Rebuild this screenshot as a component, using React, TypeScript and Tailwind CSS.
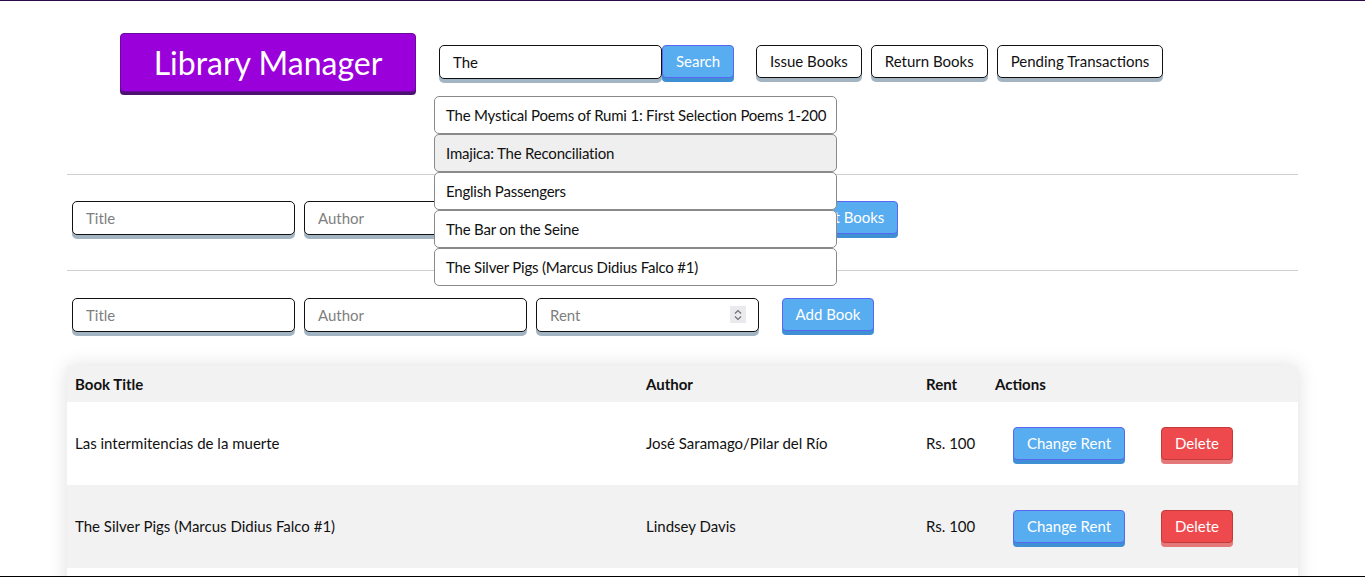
import React from 'react';

const suggestions = [
  'The Mystical Poems of Rumi 1: First Selection Poems 1-200',
  'Imajica: The Reconciliation',
  'English Passengers',
  'The Bar on the Seine',
  'The Silver Pigs (Marcus Didius Falco #1)',
];

const books = [
  { title: 'Las intermitencias de la muerte', author: 'José Saramago/Pilar del Río', rent: 100 },
  { title: 'The Silver Pigs (Marcus Didius Falco #1)', author: 'Lindsey Davis', rent: 100 },
  { title: 'The Bar on the Seine', author: 'Georges Simenon', rent: 100 },
];

const inputCls =
  'h-[34px] w-[223px] rounded-[5px] border border-[#111] bg-white px-[13px] text-[15px] text-[#111] shadow-[0_4px_0_#a3b5c3] outline-none placeholder:text-[#808080]';

const blueBtn =
  'h-[33px] whitespace-nowrap rounded-[4px] border border-[#5a66f2] bg-[#58adf0] text-[15px] text-white shadow-[0_4px_0_#3f8fd4]';

const navBtn =
  'h-[33px] whitespace-nowrap rounded-[5px] border border-[#111] bg-white px-[13px] text-[15px] text-[#111] shadow-[0_4px_0_#a3b5c3]';

function Spinner() {
  return (
    <span className="absolute right-[13px] top-[8px] flex h-[17px] w-[16px] items-center justify-center bg-[#e9e9ee]">
      <svg width="8" height="12" viewBox="0 0 8 12" fill="none" stroke="#707070" strokeWidth="1.2">
        <path d="M1 4.5 L4 1.5 L7 4.5" />
        <path d="M1 7.5 L4 10.5 L7 7.5" />
      </svg>
    </span>
  );
}

export default function App() {
  return (
    <div
      className="h-[577px] overflow-hidden border-t border-b border-t-[#2a0b48] border-b-black bg-white text-[#111]"
      style={{ fontFamily: 'Lato, "Noto Sans", sans-serif' }}
    >
      {/* top bar */}
      <div className="flex items-start pl-[120px] pt-[32px]">
        <h1 className="flex h-[59px] w-[296px] items-center justify-center rounded-[4px] border border-[#6c0aa0] bg-[#9a00da] text-[32px] text-white shadow-[0_3px_0_#4d1270]">
          Library Manager
        </h1>

        <div className="relative ml-[23px] mt-[12px] flex">
          <input className={inputCls} defaultValue="The" />
          <button className={`${blueBtn} w-[72px]`}>Search</button>

          <div className="absolute left-[-5px] top-[51px] z-10 w-[403px]">
            {suggestions.map((s, i) => (
              <div
                key={s}
                className={`flex h-[38px] items-center whitespace-nowrap rounded-[5px] border border-[#8a8a8a] px-[11px] text-[15px] tracking-[-0.2px] ${
                  i === 1 ? 'bg-[#efefef]' : 'bg-white'
                }`}
              >
                {s}
              </div>
            ))}
          </div>
        </div>

        <nav className="ml-[22px] mt-[12px] flex gap-[9px]">
          <button className={navBtn}>Issue Books</button>
          <button className={navBtn}>Return Books</button>
          <button className={navBtn}>Pending Transactions</button>
        </nav>
      </div>

      <div className="ml-[67px] w-[1231px]">
        <hr className="mt-[82px] border-[#cfcfcf]" />

        {/* import form */}
        <div className="mt-[26px] flex items-start pl-[5px]">
          <div className="flex gap-[9px]">
            <input className={inputCls} placeholder="Title" />
            <input className={inputCls} placeholder="Author" />
            <input className={inputCls} placeholder="Count" />
          </div>
          <button className={`${blueBtn} ml-[23px] w-[116px]`}>Import Books</button>
        </div>

        <hr className="mt-[35px] border-[#cfcfcf]" />

        {/* add form */}
        <div className="mt-[27px] flex items-start pl-[5px]">
          <div className="flex gap-[9px]">
            <input className={inputCls} placeholder="Title" />
            <input className={inputCls} placeholder="Author" />
            <div className="relative">
              <input className={inputCls} placeholder="Rent" />
              <Spinner />
            </div>
          </div>
          <button className={`${blueBtn} ml-[23px] w-[92px]`}>Add Book</button>
        </div>

        {/* table */}
        <div className="mt-[34px] shadow-[0_0_18px_rgba(0,0,0,0.13)]">
          <div className="flex h-[36px] items-center bg-[#f2f2f2] text-[15px] font-bold">
            <div className="w-[571px] pl-[8px]">Book Title</div>
            <div className="w-[280px] pl-[8px]">Author</div>
            <div className="w-[69px] pl-[8px]">Rent</div>
            <div className="pl-[8px]">Actions</div>
          </div>
          {books.map((b, i) => (
            <div
              key={b.title}
              className={`flex h-[83px] items-center text-[15px] ${i % 2 === 1 ? 'bg-[#f2f2f2]' : 'bg-white'}`}
            >
              <div className="w-[571px] pl-[8px]">{b.title}</div>
              <div className="w-[280px] pl-[8px]">{b.author}</div>
              <div className="w-[69px] whitespace-nowrap pl-[8px]">Rs. {b.rent}</div>
              <div className="flex items-center pl-[26px]">
                <button className={`${blueBtn} w-[112px]`}>Change Rent</button>
                <button className="ml-[36px] h-[33px] w-[72px] rounded-[4px] border border-[#c33a3a] bg-[#ee4a4e] text-[15px] text-white shadow-[0_4px_0_#e57878]">
                  Delete
                </button>
              </div>
            </div>
          ))}
        </div>
      </div>
    </div>
  );
}
